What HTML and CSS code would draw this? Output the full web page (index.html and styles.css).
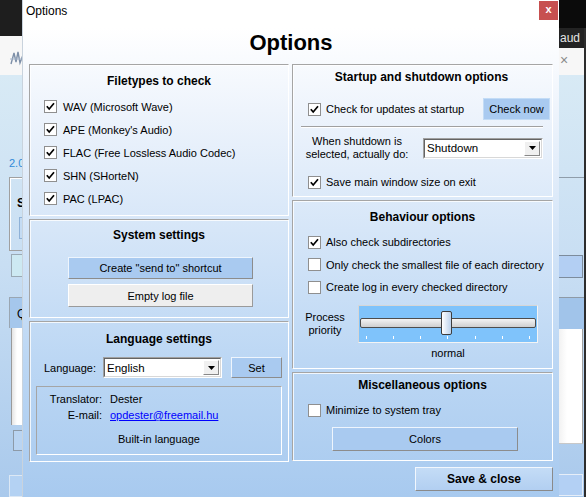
FILE: index.html
```html
<!DOCTYPE html>
<html>
<head>
<meta charset="utf-8">
<title>Options</title>
<link rel="stylesheet" href="styles.css">
</head>
<body>
<div class="screen">
  <div class="bgapp">
    <div class="strip strip-left">
      <div class="bl-dark"></div>
      <div class="bl-tool">
        <svg class="logo" width="14" height="16" viewBox="0 0 14 16">
          <path d="M1 14 L4 3 L6 12 L8 2 L10 13 L13 5" fill="none" stroke="#7d8fa8" stroke-width="1.4"/>
          <path d="M0 9 H14" stroke="#a9b8cc" stroke-width="1"/>
        </svg>
      </div>
      <div class="bl-body">
        <div class="bl-ver">2.0</div>
        <div class="bl-group">
          <div class="bl-s">S</div>
          <div class="bl-sbtn"></div>
        </div>
        <div class="bl-box"></div>
        <div class="bl-qhead">Q</div>
        <div class="bl-list"></div>
        <div class="bl-btn"></div>
        <div class="bl-bottom"></div>
      </div>
    </div>
    <div class="bg-mid"></div>
    <div class="strip strip-right">
      <div class="br-black"></div>
      <div class="br-menu">aud</div>
      <div class="br-tool">×</div>
      <div class="br-body">
        <div class="br-line"></div>
        <div class="br-btn"></div>
        <div class="br-qhead"></div>
        <div class="br-list"></div>
        <div class="br-bottom"></div>
      </div>
    </div>
  </div>

  <div class="dialog">
    <div class="titlebar">
      <span class="title-text">Options</span>
      <span class="close">x</span>
    </div>
    <h1 class="heading">Options</h1>
    <div class="cols">
      <div class="col">
        <section class="panel p-filetypes">
          <h2 class="ptitle">Filetypes to check</h2>
          <div class="crow"><span class="cb"><svg width="13" height="13" viewBox="0 0 13 13"><rect x="0.5" y="0.5" width="12" height="12" fill="#fff" stroke="#8f8f8f"/><path d="M2.8 6.2 L5.2 9 L10 3.2" fill="none" stroke="#000" stroke-width="1.7"/></svg></span><span class="clabel">WAV (Microsoft Wave)</span></div>
          <div class="crow"><span class="cb"><svg width="13" height="13" viewBox="0 0 13 13"><rect x="0.5" y="0.5" width="12" height="12" fill="#fff" stroke="#8f8f8f"/><path d="M2.8 6.2 L5.2 9 L10 3.2" fill="none" stroke="#000" stroke-width="1.7"/></svg></span><span class="clabel">APE (Monkey's Audio)</span></div>
          <div class="crow"><span class="cb"><svg width="13" height="13" viewBox="0 0 13 13"><rect x="0.5" y="0.5" width="12" height="12" fill="#fff" stroke="#8f8f8f"/><path d="M2.8 6.2 L5.2 9 L10 3.2" fill="none" stroke="#000" stroke-width="1.7"/></svg></span><span class="clabel">FLAC (Free Lossless Audio Codec)</span></div>
          <div class="crow"><span class="cb"><svg width="13" height="13" viewBox="0 0 13 13"><rect x="0.5" y="0.5" width="12" height="12" fill="#fff" stroke="#8f8f8f"/><path d="M2.8 6.2 L5.2 9 L10 3.2" fill="none" stroke="#000" stroke-width="1.7"/></svg></span><span class="clabel">SHN (SHorteN)</span></div>
          <div class="crow"><span class="cb"><svg width="13" height="13" viewBox="0 0 13 13"><rect x="0.5" y="0.5" width="12" height="12" fill="#fff" stroke="#8f8f8f"/><path d="M2.8 6.2 L5.2 9 L10 3.2" fill="none" stroke="#000" stroke-width="1.7"/></svg></span><span class="clabel">PAC (LPAC)</span></div>
        </section>

        <section class="panel p-system">
          <h2 class="ptitle">System settings</h2>
          <div class="btn btn-blue btn-wide b-send">Create "send to" shortcut</div>
          <div class="btn btn-gray btn-wide b-empty">Empty log file</div>
        </section>

        <section class="panel p-lang">
          <h2 class="ptitle">Language settings</h2>
          <div class="lang-row">
            <span class="lang-label">Language:</span>
            <div class="select s-lang"><div class="select-in"><span class="select-val">English</span><span class="select-arrow"><svg width="7" height="4" viewBox="0 0 7 4"><path d="M0 0 H7 L3.5 4 Z" fill="#000"/></svg></span></div></div>
            <div class="btn btn-blue b-set">Set</div>
          </div>
          <div class="infobox">
            <div class="irow"><span class="ilabel">Translator:</span><span class="ival">Dester</span></div>
            <div class="irow"><span class="ilabel">E-mail:</span><a class="ival link" href="#">opdester@freemail.hu</a></div>
            <div class="builtin">Built-in language</div>
          </div>
        </section>
      </div>

      <div class="col">
        <section class="panel p-startup">
          <h2 class="ptitle">Startup and shutdown options</h2>
          <div class="crow r-update"><span class="cb"><svg width="13" height="13" viewBox="0 0 13 13"><rect x="0.5" y="0.5" width="12" height="12" fill="#fff" stroke="#8f8f8f"/><path d="M2.8 6.2 L5.2 9 L10 3.2" fill="none" stroke="#000" stroke-width="1.7"/></svg></span><span class="clabel">Check for updates at startup</span><div class="btn btn-blue b-check">Check now</div></div>
          <div class="sep"></div>
          <div class="shut-row">
            <div class="shut-label">When shutdown is<br>selected, actually do:</div>
            <div class="select s-shut"><div class="select-in"><span class="select-val">Shutdown</span><span class="select-arrow"><svg width="7" height="4" viewBox="0 0 7 4"><path d="M0 0 H7 L3.5 4 Z" fill="#000"/></svg></span></div></div>
          </div>
          <div class="crow r-save"><span class="cb"><svg width="13" height="13" viewBox="0 0 13 13"><rect x="0.5" y="0.5" width="12" height="12" fill="#fff" stroke="#8f8f8f"/><path d="M2.8 6.2 L5.2 9 L10 3.2" fill="none" stroke="#000" stroke-width="1.7"/></svg></span><span class="clabel">Save main window size on exit</span></div>
        </section>

        <section class="panel p-behav">
          <h2 class="ptitle">Behaviour options</h2>
          <div class="crow r-b"><span class="cb"><svg width="13" height="13" viewBox="0 0 13 13"><rect x="0.5" y="0.5" width="12" height="12" fill="#fff" stroke="#8f8f8f"/><path d="M2.8 6.2 L5.2 9 L10 3.2" fill="none" stroke="#000" stroke-width="1.7"/></svg></span><span class="clabel">Also check subdirectories</span></div>
          <div class="crow r-b"><span class="cb"><svg width="13" height="13" viewBox="0 0 13 13"><rect x="0.5" y="0.5" width="12" height="12" fill="#fff" stroke="#8f8f8f"/></svg></span><span class="clabel">Only check the smallest file of each directory</span></div>
          <div class="crow r-b"><span class="cb"><svg width="13" height="13" viewBox="0 0 13 13"><rect x="0.5" y="0.5" width="12" height="12" fill="#fff" stroke="#8f8f8f"/></svg></span><span class="clabel">Create log in every checked directory</span></div>
          <div class="prio-row">
            <div class="prio-label">Process<br>priority</div>
            <div class="slider">
              <div class="track"></div>
              <div class="thumb"></div>
              <div class="ticks"><i></i><i></i><i></i><i></i><i></i><i></i><i></i></div>
            </div>
          </div>
          <div class="prio-val">normal</div>
        </section>

        <section class="panel p-misc">
          <h2 class="ptitle">Miscellaneous options</h2>
          <div class="crow r-min"><span class="cb"><svg width="13" height="13" viewBox="0 0 13 13"><rect x="0.5" y="0.5" width="12" height="12" fill="#fff" stroke="#8f8f8f"/></svg></span><span class="clabel">Minimize to system tray</span></div>
          <div class="btn btn-blue b-colors">Colors</div>
        </section>

        <div class="btn b-save">Save &amp; close</div>
      </div>
    </div>
  </div>
</div>
</body>
</html>
```

FILE: styles.css
```css
* { box-sizing: border-box; }
html, body { margin: 0; padding: 0; }
body {
  font-family: "Liberation Sans", Arial, sans-serif;
  font-size: 11px;
  color: #000;
  background: #1d1d1d;
}
.screen {
  position: relative;
  width: 586px;
  height: 497px;
  overflow: hidden;
}

/* ---------- background application window ---------- */
.bgapp {
  display: flex;
  height: 497px;
}
.strip { display: flex; flex-direction: column; }
.strip-left { width: 23px; }
.bg-mid { flex: 1; }
.strip-right { width: 27px; }

.bl-dark { height: 36px; background: #1e1e1e; }
.bl-tool {
  height: 39px;
  background: #f7f7f7;
  padding: 14px 0 0 10px;
}
.bl-body, .br-body {
  flex: 1;
  background: linear-gradient(to bottom, #d8eaf5 0%, #c8def3 45%, #a9c9ec 100%);
  display: flex;
  flex-direction: column;
}
.bl-ver {
  color: #2f8ad8;
  padding: 82px 0 0 9px;
  line-height: 13px;
  height: 95px;
}
.bl-group {
  margin: 7px 0 0 9px;
  height: 74px;
  border: 1px solid #a0a0a0;
  border-right: none;
  box-shadow: inset 1px 1px 0 #fff;
  padding: 18px 0 0 7px;
}
.bl-s { font-weight: bold; font-size: 12px; line-height: 14px; }
.bl-sbtn {
  margin: 7px 0 0 2px;
  height: 22px;
  background: #c4dbf3;
  border: 1px solid #8fb2d8;
  border-right: none;
}
.bl-box {
  margin: 3px 0 0 11px;
  height: 23px;
  background: #cde9f2;
  border: 1px solid #9aa9b4;
  border-right: none;
}
.bl-qhead {
  margin: 20px 0 0 9px;
  height: 31px;
  background: #a5c7ec;
  border-top: 1px solid #9aa6b2;
  border-left: 1px solid #9aa6b2;
  padding: 9px 0 0 7px;
  font-size: 12px;
}
.bl-list {
  margin-left: 11px;
  height: 97px;
  background: linear-gradient(to right, #e4e4e4, #ffffff 5px);
  border-left: 1px solid #9a9a9a;
}
.bl-btn {
  margin: 5px 0 0 13px;
  height: 21px;
  background: #b9d4f2;
  border: 1px solid #8d9aa8;
  border-right: none;
}
.bl-bottom {
  margin: 24px 0 0 9px;
  height: 22px;
  background: #b4d2f3;
  border: 1px solid #dce8f5;
  border-right: none;
}

.br-black { height: 28px; background: #0b0b0b; }
.br-menu {
  height: 20px;
  background: #232323;
  color: #e6e6e6;
  font-size: 12px;
  line-height: 20px;
  padding-left: 1px;
  border-right: 2px solid #2d2d2d;
}
.br-tool {
  height: 27px;
  background: #f7f7f7;
  color: #8a8a8a;
  font-size: 14px;
  line-height: 24px;
  padding-left: 1px;
  border-right: 2px solid #2d2d2d;
}
.br-body { border-right: 2px solid #2d2d2d; }
.br-line {
  margin-top: 102px;
  height: 1px;
  background: #8f9daa;
}
.br-btn {
  margin-top: 77px;
  height: 23px;
  background: #b3cff3;
  border: 1px solid #7d8c9c;
  border-left: none;
  margin-right: 1px;
}
.br-qhead {
  margin-top: 19px;
  height: 32px;
  background: #a1c4ea;
  border-top: 1px solid #8e9aa6;
}
.br-list {
  height: 115px;
  background: linear-gradient(to right, #f2f2f2, #ffffff 8px);
  border-right: 1px solid #a0a0a0;
  border-bottom: 1px solid #c8c8c8;
  margin-right: 1px;
}
.br-bottom {
  margin-top: 30px;
  height: 22px;
  background: #b3d0f4;
  border: 1px solid #e6eef8;
  border-left: none;
  margin-right: 1px;
}

/* ---------- dialog ---------- */
.dialog {
  position: absolute;
  left: 23px;
  top: 0;
  width: 536px;
  height: 497px;
  background: linear-gradient(to bottom, #ffffff 0px, #ffffff 28px, #eef4fc 110px, #d6e6f8 230px, #bcd7f4 360px, #a8caef 497px);
  box-shadow: -1px 0 0 #c9d3dd;
}
.titlebar {
  height: 22px;
  display: flex;
  justify-content: space-between;
  align-items: flex-start;
}
.title-text {
  font-size: 12px;
  line-height: 22px;
  padding-left: 3px;
  color: #000;
}
.close {
  margin: 1px 1px 0 0;
  width: 19px;
  height: 19px;
  background: #c75050;
  color: #fff;
  font-weight: bold;
  font-size: 11px;
  line-height: 17px;
  text-align: center;
}
.heading {
  margin: 8px 0 0;
  height: 26px;
  font-size: 22px;
  line-height: 26px;
  font-weight: bold;
  text-align: center;
}
.cols {
  margin-top: 8px;
  display: grid;
  grid-template-columns: 260px 261px;
  column-gap: 3px;
  padding-left: 6px;
}
.col {
  display: flex;
  flex-direction: column;
  gap: 3px;
}
.panel {
  border: 1px solid;
  border-color: #a5a5a5 #fff #fff #a5a5a5;
  box-shadow: inset 1px 1px 0 rgba(255,255,255,0.8);
}
.ptitle {
  margin: 0;
  font-size: 12px;
  line-height: 14px;
  font-weight: bold;
  text-align: center;
}
.crow {
  display: flex;
  align-items: center;
  height: 23px;
  padding-left: 14px;
}
.cb { width: 13px; height: 13px; display: block; flex: none; }
.cb svg { display: block; }
.clabel { margin-left: 6px; white-space: nowrap; }

.btn {
  display: flex;
  align-items: center;
  justify-content: center;
  border: 1px solid;
  border-color: #eef5fd #8c8c8c #8c8c8c #eef5fd;
  white-space: nowrap;
}
.btn-blue { background: #a9caf0; }
.btn-gray { background: #eeeeee; border-color: #ffffff #9a9a9a #9a9a9a #ffffff; }

/* filetypes */
.p-filetypes { height: 152px; padding-top: 9px; }
.p-filetypes .ptitle { margin-bottom: 7px; }

/* system */
.p-system { height: 99px; padding-top: 8px; }
.btn-wide { width: 185px; margin-left: 38px; }
.b-send { margin-top: 15px; height: 22px; }
.b-empty { margin-top: 5px; height: 23px; }

/* language */
.p-lang { height: 141px; padding-top: 10px; }
.lang-row {
  margin-top: 11px;
  display: flex;
  align-items: center;
  height: 21px;
  padding-left: 14px;
}
.lang-label { width: 59px; }
.select {
  height: 21px;
  border: 1px solid;
  border-color: #a0a0a0 #ffffff #ffffff #a0a0a0;
}
.select-in {
  height: 100%;
  display: flex;
  align-items: center;
  background: #fff;
  border: 1px solid;
  border-color: #646464 #d8d8d8 #d8d8d8 #646464;
  padding-right: 1px;
}
.select-val { flex: 1; font-size: 11.5px; padding-left: 2px; }
.select-arrow {
  width: 16px;
  height: 15px;
  background: #f0f0f0;
  border: 1px solid;
  border-color: #ffffff #888 #888 #ffffff;
  display: flex;
  align-items: center;
  justify-content: center;
}
.select-arrow svg { display: block; }
.s-lang { width: 119px; }
.b-set { width: 51px; height: 21px; margin-left: 9px; }
.infobox {
  margin: 8px 0 0 6px;
  width: 246px;
  height: 69px;
  border: 1px solid;
  border-color: #a5a5a5 #fff #fff #a5a5a5;
  padding-top: 4px;
}
.irow { display: flex; line-height: 16px; }
.ilabel { width: 65px; text-align: right; }
.ival { margin-left: 8px; }
.link { color: #0000ff; text-decoration: underline; }
.builtin { margin-top: 8px; line-height: 16px; text-align: center; }

/* startup */
.p-startup { height: 133px; padding-top: 5px; padding-right: 2px; }
.r-update { margin-top: 14px; height: 22px; padding-left: 15px; }
.r-update .clabel { margin-left: 5px; }
.b-check { margin-left: auto; width: 67px; height: 22px; border-color: #c3dcf6; }
.sep {
  margin: 6px 7px 0 8px;
  height: 2px;
  border-top: 1px solid #a0a0a0;
  border-bottom: 1px solid #fff;
}
.shut-row {
  margin-top: 7px;
  display: flex;
  align-items: center;
  height: 26px;
  padding-left: 8px;
}
.shut-label {
  width: 112px;
  text-align: center;
  line-height: 13px;
  white-space: nowrap;
}
.s-shut { width: 120px; margin-left: 10px; }
.r-save { margin-top: 11px; height: 20px; padding-left: 15px; }
.r-save .clabel { margin-left: 5px; }

/* behaviour */
.p-behav { height: 169px; padding-top: 9px; }
.p-behav .ptitle { margin-bottom: 7px; }
.r-b { height: 22.5px; padding-left: 15px; }
.r-b .clabel { margin-left: 5px; }
.prio-row {
  margin-top: 6px;
  display: flex;
  align-items: center;
  padding-left: 8px;
}
.prio-label {
  width: 48px;
  text-align: center;
  line-height: 13px;
}
.slider {
  position: relative;
  margin-left: 9px;
  width: 180px;
  height: 38px;
  background: #7fc3fb;
  border: 1px solid;
  border-color: #d6d6d6 #f4f4f4 #f4f4f4 #d6d6d6;
  padding: 12px 1px 0;
}
.track {
  height: 10px;
  border: 1px solid #4d4d4d;
  border-radius: 2px;
  background: linear-gradient(to bottom, #f4f4f4, #cfcfcf);
}
.thumb {
  position: absolute;
  left: 82px;
  top: 5px;
  width: 11px;
  height: 24px;
  border: 1px solid #3d3d3d;
  border-radius: 2px;
  background: linear-gradient(to right, #ffffff, #bcd2ec);
}
.ticks {
  margin-top: 8px;
  display: flex;
  justify-content: space-between;
  padding: 0 6px 0 6px;
}
.ticks i { display: block; width: 1px; height: 3px; background: #ffffff; }
.prio-val {
  margin: 3px 0 0 65px;
  width: 180px;
  text-align: center;
  line-height: 14px;
}

/* misc */
.p-misc { height: 89px; padding-top: 5px; }
.r-min { margin-top: 8px; height: 20px; padding-left: 15px; }
.r-min .clabel { margin-left: 5px; }
.b-colors { margin: 7px 0 0 39px; width: 186px; height: 24px; }

/* save */
.b-save {
  align-self: flex-end;
  margin-top: 3px;
  width: 138px;
  height: 24px;
  font-weight: bold;
  font-size: 12px;
  background: linear-gradient(to bottom, #c4dcf6, #b2cff1);
  border-color: #f2f7fd #8a8a8a #8a8a8a #f2f7fd;
}
```
